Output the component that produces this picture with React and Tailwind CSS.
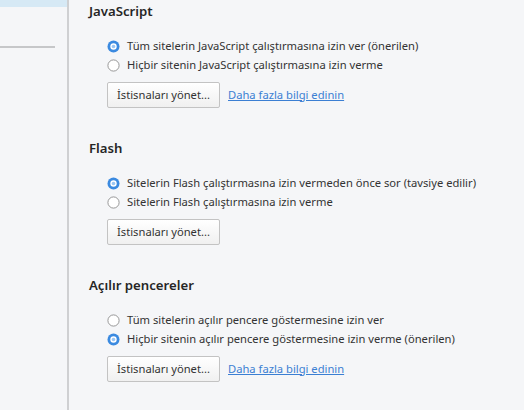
import React from "react";

const sections = [
  {
    title: "JavaScript",
    options: [
      { label: "Tüm sitelerin JavaScript çalıştırmasına izin ver (önerilen)", checked: true },
      { label: "Hiçbir sitenin JavaScript çalıştırmasına izin verme", checked: false },
    ],
    link: true,
  },
  {
    title: "Flash",
    options: [
      { label: "Sitelerin Flash çalıştırmasına izin vermeden önce sor (tavsiye edilir)", checked: true },
      { label: "Sitelerin Flash çalıştırmasına izin verme", checked: false },
    ],
    link: false,
  },
  {
    title: "Açılır pencereler",
    options: [
      { label: "Tüm sitelerin açılır pencere göstermesine izin ver", checked: false },
      { label: "Hiçbir sitenin açılır pencere göstermesine izin verme (önerilen)", checked: true },
    ],
    link: true,
  },
];

function Radio({ checked }) {
  if (checked) {
    return (
      <svg width="13" height="13" viewBox="0 0 13 13" className="shrink-0">
        <circle cx="6.5" cy="6.5" r="6" fill="#3b8ae0" />
        <circle cx="6.5" cy="6.5" r="3.2" fill="#ffffff" />
        <circle cx="6.5" cy="6.5" r="1.8" fill="#9cc6f2" />
      </svg>
    );
  }
  return (
    <svg width="13" height="13" viewBox="0 0 13 13" className="shrink-0">
      <circle cx="6.5" cy="6.5" r="5.6" fill="#ffffff" stroke="#8d8d8d" strokeWidth="0.9" />
    </svg>
  );
}

function Section({ title, options, link }) {
  return (
    <section className="h-[137px]">
      <h2 className="h-[22px] text-[13.2px] leading-[22px] font-semibold text-[#262626]">{title}</h2>
      <div className="mt-[15px] flex flex-col pl-[18px]">
        {options.map((o) => (
          <label key={o.label} className="flex h-[19px] items-center gap-[7px] text-[11.2px] text-[#333]">
            <Radio checked={o.checked} />
            <span>{o.label}</span>
          </label>
        ))}
        <div className="mt-[7px] flex items-center gap-[8px]">
          <button className="h-[26px] w-[113px] rounded-[2px] border border-[#c3c3c3] bg-gradient-to-b from-white to-[#f0f0f0] text-[11.2px] text-[#333]">
            İstisnaları yönet...
          </button>
          {link && (
            <a href="#" className="text-[11.2px] text-[#3b7fd3] underline">
              Daha fazla bilgi edinin
            </a>
          )}
        </div>
      </div>
    </section>
  );
}

export default function App() {
  return (
    <div
      className="flex h-[410px] w-[524px] overflow-hidden bg-[#f5f6f8]"
      style={{ fontFamily: '"Noto Sans", "Open Sans", sans-serif' }}
    >
      <aside className="w-[69px] shrink-0 border-r-2 border-[#cfd0d2]">
        <div className="h-[7px] bg-[#d6e9f5]" />
        <div className="mt-[39px] h-[2px] w-[55px] bg-[#c6c7c9]" />
      </aside>
      <main className="flex-1 pl-[20px] pt-0">
        {sections.map((s) => (
          <Section key={s.title} {...s} />
        ))}
      </main>
    </div>
  );
}
